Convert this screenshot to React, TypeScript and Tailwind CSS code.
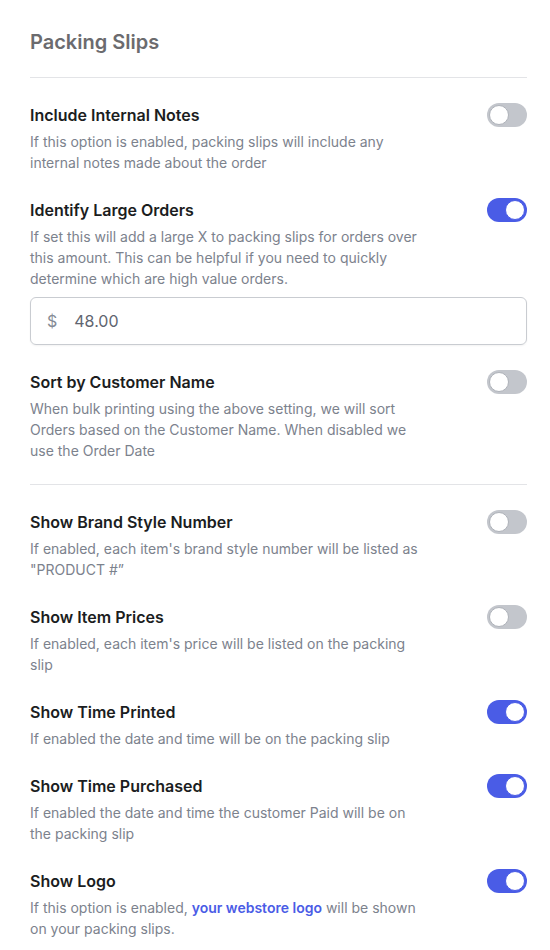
import React, { useState } from "react";

type Setting = {
  id: string;
  title: string;
  description: React.ReactNode;
  on: boolean;
};

function Toggle({ on, onChange }: { on: boolean; onChange: () => void }) {
  return (
    <button
      type="button"
      role="switch"
      aria-checked={on}
      onClick={onChange}
      className={
        on
          ? "relative flex h-6 w-10 shrink-0 items-center rounded-full bg-[#4a5ce6] p-[2px]"
          : "relative flex h-6 w-10 shrink-0 items-center rounded-full bg-[#c3c6cc] p-[2px]"
      }
    >
      <span
        className={
          on
            ? "ml-auto h-5 w-5 rounded-full border border-[#4a5ce6] bg-white"
            : "h-5 w-5 rounded-full border border-[#aeb2b9] bg-white"
        }
      />
    </button>
  );
}

function SettingRow({
  setting,
  onToggle,
  children,
}: {
  setting: Setting;
  onToggle: () => void;
  children?: React.ReactNode;
}) {
  return (
    <div>
      <div className="flex items-start justify-between">
        <div className="max-w-[392px]">
          <h3 className="text-base font-semibold leading-6 text-[#1b1d21]">
            {setting.title}
          </h3>
          <p className="mt-1 text-sm leading-[21px] text-[#7c828d]">
            {setting.description}
          </p>
        </div>
        <Toggle on={setting.on} onChange={onToggle} />
      </div>
      {children}
    </div>
  );
}

export default function App() {
  const [settings, setSettings] = useState<Setting[]>([
    {
      id: "notes",
      title: "Include Internal Notes",
      description:
        "If this option is enabled, packing slips will include any internal notes made about the order",
      on: false,
    },
    {
      id: "large",
      title: "Identify Large Orders",
      description:
        "If set this will add a large X to packing slips for orders over this amount. This can be helpful if you need to quickly determine which are high value orders.",
      on: true,
    },
    {
      id: "sort",
      title: "Sort by Customer Name",
      description:
        "When bulk printing using the above setting, we will sort Orders based on the Customer Name. When disabled we use the Order Date",
      on: false,
    },
    {
      id: "style",
      title: "Show Brand Style Number",
      description:
        "If enabled, each item's brand style number will be listed as \"PRODUCT #\u201D",
      on: false,
    },
    {
      id: "prices",
      title: "Show Item Prices",
      description:
        "If enabled, each item's price will be listed on the packing slip",
      on: false,
    },
    {
      id: "printed",
      title: "Show Time Printed",
      description: "If enabled the date and time will be on the packing slip",
      on: true,
    },
    {
      id: "purchased",
      title: "Show Time Purchased",
      description:
        "If enabled the date and time the customer Paid will be on the packing slip",
      on: true,
    },
    {
      id: "logo",
      title: "Show Logo",
      description: (
        <>
          If this option is enabled,{" "}
          <a href="#" className="font-semibold text-[#4a5ce6]">
            your webstore logo
          </a>{" "}
          will be shown on your packing slips.
        </>
      ),
      on: true,
    },
  ]);
  const [amount, setAmount] = useState("48.00");

  const toggle = (id: string) =>
    setSettings((prev) =>
      prev.map((s) => (s.id === id ? { ...s, on: !s.on } : s))
    );

  const row = (id: string, children?: React.ReactNode) => {
    const s = settings.find((x) => x.id === id)!;
    return (
      <SettingRow key={id} setting={s} onToggle={() => toggle(id)}>
        {children}
      </SettingRow>
    );
  };

  return (
    <div className="bg-white pl-[30px] pr-[23px] pt-7 font-['Inter',sans-serif] antialiased">
      <h2 className="text-xl font-semibold leading-7 text-[#6b6b6e]">
        Packing Slips
      </h2>
      <div className="mt-[21px] border-t border-[#e3e4e7]" />

      <div className="mt-[25px] flex flex-col gap-[25px]">
        {row("notes")}
        {row(
          "large",
          <label className="mt-2 flex h-12 items-center rounded-md border border-[#c9ccd1] px-4 shadow-xs">
            <span className="text-base text-[#858b95]">$</span>
            <input
              value={amount}
              onChange={(e) => setAmount(e.target.value)}
              className="ml-[17px] w-full bg-transparent text-base text-[#5f6570] outline-none"
            />
          </label>
        )}
        {row("sort")}
        <div className="-mt-[2px] border-t border-[#e3e4e7]" />
        {row("style")}
        {row("prices")}
        {row("printed")}
        {row("purchased")}
        {row("logo")}
      </div>
    </div>
  );
}
